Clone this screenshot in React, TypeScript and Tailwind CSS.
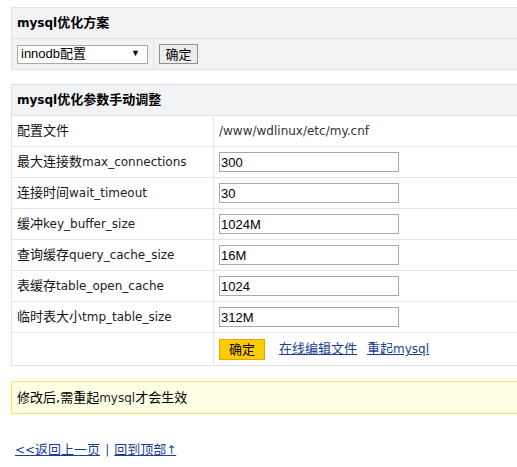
import React from "react";

const Cn = ({ children }: { children: React.ReactNode }) => (
  <span className="text-[13px]">{children}</span>
);

const rows: { cn: string; en: string; value: string }[] = [
  { cn: "最大连接数", en: "max_connections", value: "300" },
  { cn: "连接时间", en: "wait_timeout", value: "30" },
  { cn: "缓冲", en: "key_buffer_size", value: "1024M" },
  { cn: "查询缓存", en: "query_cache_size", value: "16M" },
  { cn: "表缓存", en: "table_open_cache", value: "1024" },
  { cn: "临时表大小", en: "tmp_table_size", value: "312M" },
];

const App = () => {
  return (
    <div className="w-[517px] h-[467px] overflow-hidden bg-white pl-[11px] pt-[7px] font-['DejaVu_Sans','Noto_Sans_CJK_SC',sans-serif] text-[12px] text-[#111]">
      <div className="w-[540px]">
        {/* 方案选择 */}
        <div className="border border-[#dfe2e6]">
          <div className="h-[31px] flex items-center pl-[5px] bg-[#f2f3f5] border-b border-[#dfe2e6] font-bold text-black">
            mysql<Cn>优化方案</Cn>
          </div>
          <div className="h-[30px] flex bg-[#f2f2f2]">
            <div className="w-[142px] border-r border-[#e2e4e7] flex items-center pl-[5px]">
              <div className="w-[131px] h-[19px] bg-white border border-[#a9a9a9] flex items-center justify-between pl-[3px] pr-[7px] text-[13px] font-['Liberation_Sans','Noto_Sans_CJK_SC',sans-serif] text-black">
                <span>innodb配置</span>
                <span className="text-[9px]">▼</span>
              </div>
            </div>
            <div className="flex items-center pl-[5px]">
              <button className="h-[20px] w-[39px] border border-[#8f8f8f] bg-[#ececec] text-[13px] text-black leading-none">
                确定
              </button>
            </div>
          </div>
        </div>

        {/* 参数调整 */}
        <div className="mt-[14px] border border-[#dfe2e6]">
          <div className="h-[31px] flex items-center pl-[5px] bg-[#f2f3f5] border-b border-[#dfe2e6] font-bold text-black">
            mysql<Cn>优化参数手动调整</Cn>
          </div>
          <div className="h-[31px] flex border-b border-[#e3e5e8]">
            <div className="w-[202px] border-r border-[#e3e5e8] flex items-center pl-[5px]">
              <Cn>配置文件</Cn>
            </div>
            <div className="flex items-center pl-[5px] text-[#333]">/www/wdlinux/etc/my.cnf</div>
          </div>
          {rows.map((r) => (
            <div key={r.en} className="h-[31px] flex border-b border-[#e3e5e8]">
              <div className="w-[202px] border-r border-[#e3e5e8] flex items-center pl-[5px]">
                <Cn>{r.cn}</Cn>
                <span className="text-[#222]">{r.en}</span>
              </div>
              <div className="flex items-center pl-[5px]">
                <input
                  defaultValue={r.value}
                  className="w-[180px] h-[20px] border border-[#a9a9a9] px-[1px] text-[13px] text-black font-['Liberation_Sans',sans-serif] outline-none"
                />
              </div>
            </div>
          ))}
          <div className="h-[32px] flex">
            <div className="w-[202px] border-r border-[#e3e5e8]" />
            <div className="flex items-center pl-[5px] gap-[14px]">
              <button className="h-[21px] w-[46px] bg-[#ffcc00] border border-[#f5a000] text-[13px] text-black leading-none">
                确定
              </button>
              <div className="flex items-center gap-[10px] text-[13px] text-[#1a3f8f]">
                <a href="#" className="underline">在线编辑文件</a>
                <a href="#" className="underline">
                  重起<span className="text-[12px]">mysql</span>
                </a>
              </div>
            </div>
          </div>
        </div>

        {/* 提示 */}
        <div className="mt-[15px] h-[33px] flex items-center pl-[5px] bg-[#ffffe3] border border-[#ffe168] text-black">
          <Cn>修改后,需重起</Cn>
          <span className="text-[#223]">mysql</span>
          <Cn>才会生效</Cn>
        </div>

        <div className="mt-[26px] pl-[4px] flex items-center gap-[5px] text-[#1a3f8f]">
          <a href="#" className="underline">
            &lt;&lt;<Cn>返回上一页</Cn>
          </a>
          <span>|</span>
          <a href="#" className="underline">
            <Cn>回到顶部</Cn>↑
          </a>
        </div>
      </div>
    </div>
  );
};

export default App;
